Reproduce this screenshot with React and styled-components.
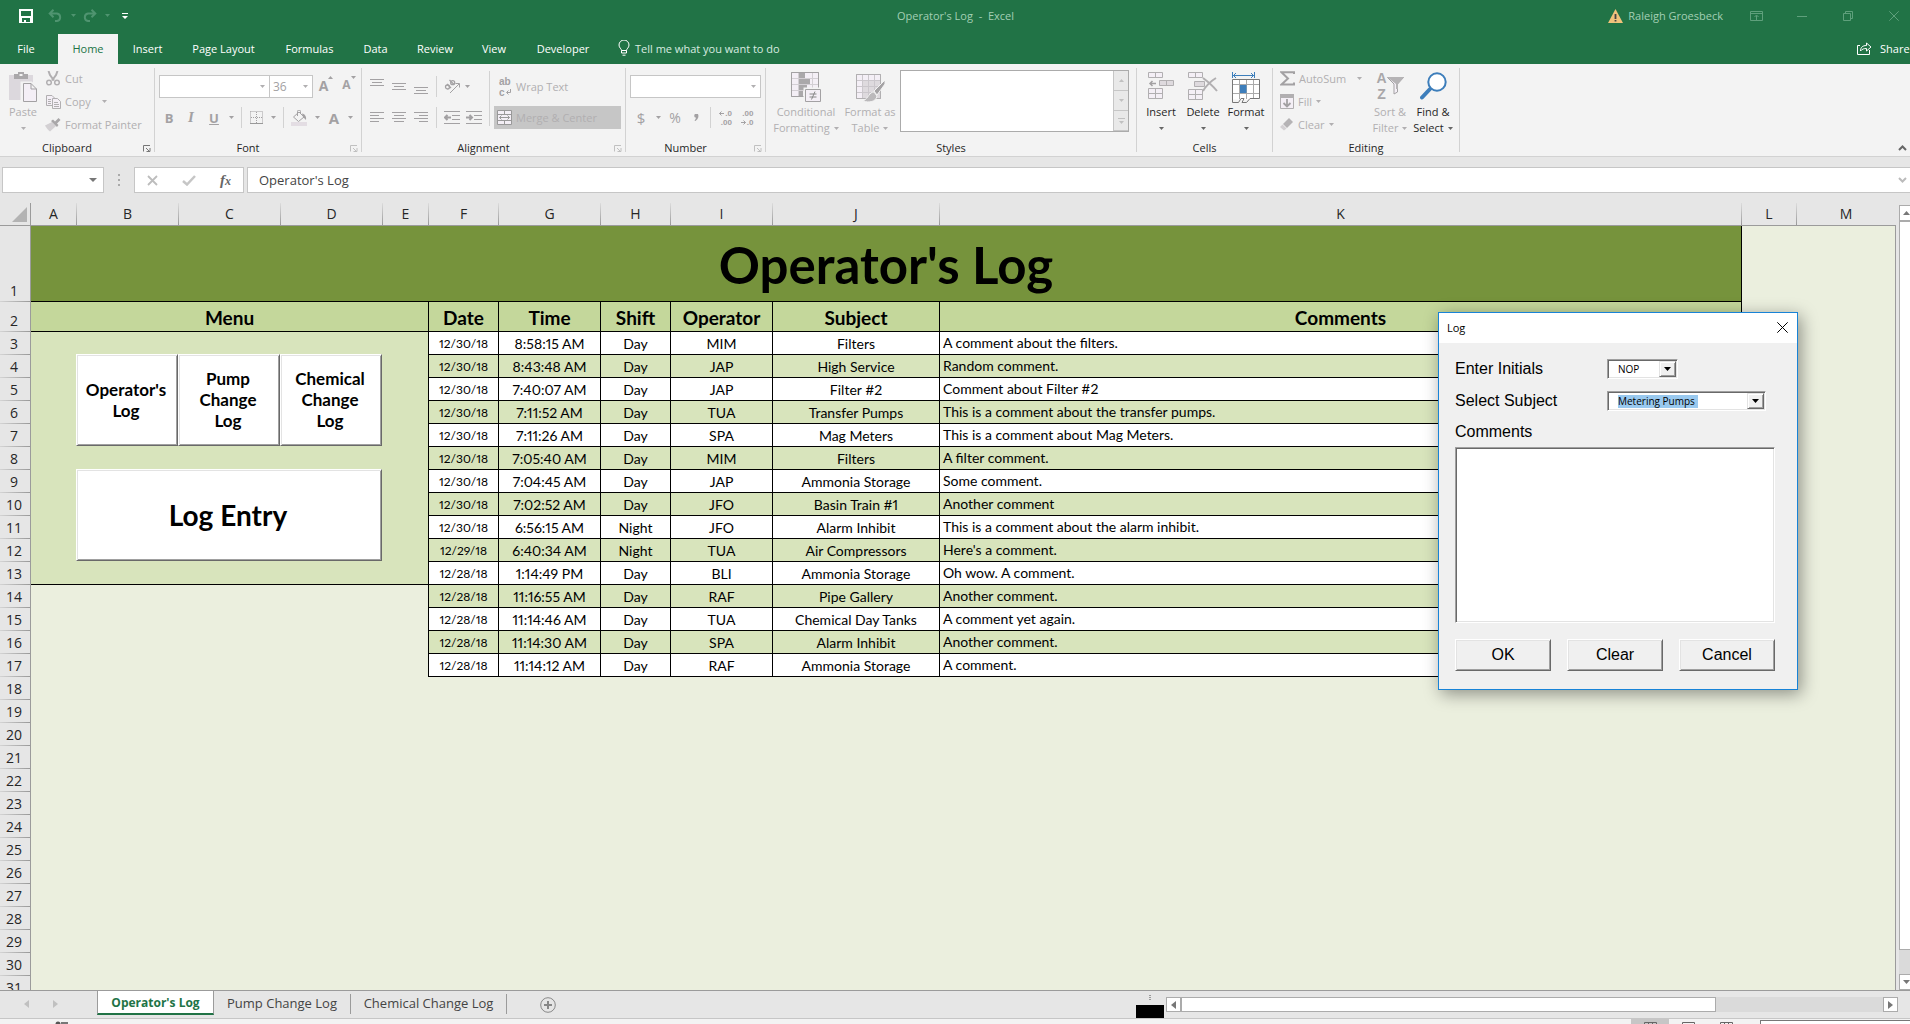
import React from "react";
import styled, { createGlobalStyle, css } from "styled-components";

const ui = `"Open Sans", "Noto Sans", sans-serif`;
const sheetFont = `Lato, "Open Sans", sans-serif`;
const dim = "#b1afb1";
const mid = "#a3a1a3";
const pale = "#f4eff6";

const Global = createGlobalStyle`
  * { box-sizing: border-box; }
  body { margin: 0; overflow: hidden; font-family: ${ui}; }
  button, select, input, textarea { font: inherit; color: inherit; margin: 0; padding: 0; border: 0; border-radius: 0; background: none; outline: none; }
  svg { display: block; flex: none; }
`;

const Window = styled.div`
  display: flex;
  flex-direction: column;
  height: 100vh;
  background: #e6e6e6;
  font-size: 11px;
  color: #262626;
  white-space: nowrap;
`;

/* ---------- title bar and ribbon tabs ---------- */
const TitleBar = styled.header`
  display: grid;
  grid-template-columns: 1fr auto 1fr;
  align-items: center;
  height: 34px;
  padding: 0 11px 3px 12px;
  background: #217346;
  color: #a3cfb4;
`;
const QuickAccess = styled.div`
  display: flex;
  align-items: center;
`;
const QuickButton = styled.button`
  display: flex;
  align-items: center;
  justify-content: center;
  width: ${(p) => p.$w}px;
  height: 24px;
  color: ${(p) => (p.$on ? "#fff" : "#4f9470")};
`;
const DocTitle = styled.div`
  white-space: pre;
`;
const Account = styled.div`
  display: flex;
  align-items: center;
  justify-content: flex-end;
`;
const UserName = styled.span`
  margin: 0 10px 0 5px;
`;
const WindowButton = styled.button`
  display: flex;
  align-items: center;
  justify-content: ${(p) => (p.$last ? "flex-end" : "center")};
  width: ${(p) => (p.$last ? 28 : 46)}px;
  height: 24px;
  color: #5fa07c;
`;
const TabStrip = styled.nav`
  display: flex;
  height: 30px;
  background: #217346;
  color: #fff;
  overflow: hidden;
`;
const RibbonTab = styled.button`
  width: ${(p) => p.$w}px;
  height: 30px;
  padding: 0 ${(p) => (p.$first ? 6 : 0)}px 2px 0;
  text-align: center;
  background: ${(p) => (p.$active ? "#f3f3f3" : "transparent")};
  color: ${(p) => (p.$active ? "#217346" : "#fff")};
`;
const TellMe = styled.button`
  display: flex;
  align-items: center;
  gap: 5px;
  margin-left: 12px;
  padding-bottom: 2px;
  color: #d9ebe0;
`;
const Share = styled.button`
  display: flex;
  align-items: center;
  gap: 8px;
  flex: none;
  margin: 0 0 0 auto;
  padding-bottom: 2px;
  width: 53px;
`;

/* ---------- ribbon ---------- */
const Ribbon = styled.section`
  display: flex;
  height: 93px;
  padding-top: 4px;
  background: #f3f3f3;
  border-bottom: 1px solid #d2d2d2;
  color: ${dim};
`;
const GroupBox = styled.div`
  display: flex;
  flex-direction: column;
  flex: none;
  width: ${(p) => p.$w}px;
  height: 84px;
  border-right: 1px solid #d2d2d2;
`;
const GroupBody = styled.div`
  display: flex;
  height: 71px;
  padding: ${(p) => (p.$rows ? 3 : 0)}px 4px 0;
`;
const GroupFoot = styled.div`
  display: grid;
  grid-template-columns: 1fr ${(p) => (p.$launcher ? "20px" : "")};
  height: 13px;
  line-height: 17px;
  text-align: center;
  color: #262626;
`;
const Launcher = styled.button`
  display: flex;
  padding: 6px 0 0 9px;
  color: ${(p) => (p.$on ? "#777" : "#c0c0c0")};
`;
const Column = styled.div`
  display: flex;
  flex-direction: column;
`;
const ToolRow = styled.div`
  display: flex;
  align-items: center;
  height: 31px;
`;
const Tool = styled.button`
  display: flex;
  align-items: ${(p) => (p.$top ? "flex-start" : "center")};
  justify-content: center;
  flex: none;
  width: ${(p) => p.$w}px;
  height: 22px;
  color: ${mid};
  font-size: ${(p) => p.$size || 14}px;
  font-weight: ${(p) => (p.$bold ? 700 : 400)};
  font-style: ${(p) => (p.$italic ? "italic" : "normal")};
  font-family: ${(p) => (p.$serif ? `"Liberation Serif", serif` : ui)};
  text-decoration: ${(p) => (p.$under ? "underline" : "none")};
`;
const Rule = styled.i`
  flex: none;
  width: 1px;
  height: ${(p) => p.$h || 21}px;
  margin: 0 ${(p) => p.$m}px;
  background: #d2d2d2;
`;
const BigTool = styled.button`
  display: flex;
  flex-direction: column;
  align-items: center;
  flex: none;
  width: ${(p) => p.$w}px;
  padding-top: 4px;
  line-height: 16px;
  color: ${(p) => (p.$on ? "#262626" : dim)};
`;
const BigIcon = styled.span`
  height: 32px;
`;
const Line = styled.span`
  display: flex;
  align-items: center;
  gap: 4px;
  height: 16px;
`;
const SmallTools = styled.div`
  display: flex;
  flex-direction: column;
  width: ${(p) => p.$w}px;
  margin-top: -1px;
`;
const SmallTool = styled.button`
  display: flex;
  align-items: center;
  gap: 4px;
  height: 23px;
  padding-left: 3px;
  color: ${dim};
`;
const IconSlot = styled.span`
  display: flex;
  justify-content: center;
  width: 16px;
`;
const Spacer = styled.span`
  width: ${(p) => p.$w}px;
`;
const TextTool = styled.button`
  display: flex;
  align-items: center;
  gap: 4px;
  width: 127px;
  height: 23px;
  padding-left: 3px;
  background: ${(p) => (p.$pressed ? "#c6c6c6" : "transparent")};
`;
const Combo = styled.span`
  display: flex;
  align-items: center;
  width: ${(p) => p.$w}px;
  height: 23px;
  padding-right: 4px;
  background: #fff;
  border: 1px solid #c6c6c6;
  border-left-width: ${(p) => (p.$joined ? 0 : 1)}px;
  font-size: 12px;
`;
const BareSelect = styled.select`
  appearance: none;
  flex: 1;
  min-width: 0;
  padding-left: 3px;
  color: ${mid};
  opacity: 1;
`;
const Gallery = styled.div`
  display: flex;
  width: 229px;
  height: 62px;
  margin: 2px 0 0 2px;
  background: #fff;
  border: 1px solid #ababab;
`;
const GalleryKeys = styled.div`
  display: grid;
  grid-template-rows: repeat(3, 1fr);
  width: 15px;
  margin-left: auto;
`;
const GalleryKey = styled.button`
  display: flex;
  flex-direction: column;
  align-items: center;
  justify-content: center;
  gap: 2px;
  background: #e9e9e9;
  border-left: 1px solid #c6c6c6;
  border-bottom: 1px solid #c6c6c6;
`;
const GalleryBar = styled.i`
  width: 7px;
  height: 1px;
  background: #c0c0c0;
`;
const Collapse = styled.button`
  align-self: flex-end;
  margin: 0 3px 5px auto;
  color: #666;
`;

/* ---------- formula bar ---------- */
const FormulaBar = styled.section`
  display: flex;
  align-items: center;
  height: 46px;
  padding: 0 0 0 2px;
`;
const Boxed = css`
  display: flex;
  align-items: center;
  height: 26px;
  background: #fff;
  border: 1px solid #c6c6c6;
`;
const NameBox = styled.label`
  ${Boxed}
  width: 102px;
  padding-right: 6px;
`;
const BareInput = styled.input`
  flex: 1;
  min-width: 0;
  padding-left: ${(p) => p.$pad || 0}px;
  font-size: 13px;
  color: #444;
`;
const Grip = styled.span`
  display: grid;
  gap: 3px;
  justify-content: center;
  width: 30px;
`;
const Dot = styled.i`
  width: 2px;
  height: 2px;
  background: #aaa;
`;
const FormulaKeys = styled.div`
  ${Boxed}
  width: 110px;
  margin-right: 3px;
  justify-content: space-around;
`;
const FormulaField = styled.label`
  ${Boxed}
  flex: 1;
  border-right: 0;
  padding-right: 3px;
`;

/* ---------- sheet ---------- */
const Workspace = styled.main`
  display: grid;
  grid-template-columns: 31px minmax(0, 1fr) 14px;
  grid-template-rows: 23px minmax(0, 1fr);
  flex: 1;
  min-height: 0;
`;
const Corner = styled.div`
  display: flex;
  align-items: flex-end;
  justify-content: flex-end;
  padding: 0 3px 3px 0;
  border-right: 1px solid #9b9b9b;
  border-bottom: 1px solid #9b9b9b;
`;
const ColumnHeads = styled.div`
  display: grid;
  grid-template-columns: 46px 102px 102px 102px 46px 70px 102px 70px 102px 167px minmax(0, 1fr) 55px 99px;
  border-bottom: 1px solid #9b9b9b;
`;
const ColumnHead = styled.div`
  padding-right: 1px;
  font-size: 14px;
  line-height: 21px;
  text-align: center;
  background: linear-gradient(#dcdcdc, #999) right / 1px 100% no-repeat;
  &:last-child { background: none; }
`;
const RowHeads = styled.div`
  border-right: 1px solid #9b9b9b;
  overflow: hidden;
`;
const RowHead = styled.div`
  display: flex;
  align-items: flex-end;
  justify-content: center;
  height: ${(p) => p.$h}px;
  padding-right: 2px;
  font-size: 14px;
  line-height: 22px;
  background: linear-gradient(90deg, #d4d4d4, #999) bottom / 100% 1px no-repeat;
`;
const Sheet = styled.div`
  padding-right: 153px;
  background: #ebefde;
  border-right: 1px solid #9b9b9b;
  font-family: ${sheetFont};
  color: #000;
  overflow: hidden;
`;
const Banner = styled.h1`
  margin: 0;
  height: 76px;
  border-right: 1px solid #000;
  border-bottom: 1px solid #000;
  background: #76933c;
  font-size: 51px;
  font-weight: 700;
  line-height: 78px;
  text-align: center;
`;
const Split = styled.div`
  display: flex;
  align-items: flex-start;
`;
const MenuPanel = styled.aside`
  flex: none;
  width: 397px;
  height: 283px;
  background: #d8e4bc;
  border-bottom: 1px solid #000;
`;
const MenuTitle = styled.h2`
  margin: 0;
  height: 30px;
  border-bottom: 1px solid #000;
  background: #c4d79b;
  font-size: 19px;
  font-weight: 700;
  line-height: 31px;
  text-align: center;
`;
const MenuButtons = styled.div`
  display: grid;
  grid-template-columns: repeat(3, 102px);
  grid-auto-rows: 92px;
  row-gap: 23px;
  padding: 22px 45px;
`;
const MenuButton = styled.button`
  grid-column: ${(p) => (p.$wide ? "1 / -1" : "auto")};
  padding: 0 2px 1px 0;
  background: #fff;
  border: 1px solid;
  border-color: #fff #696969 #696969 #fff;
  box-shadow: inset 1px 1px #e3e3e3, inset -1px -1px #a0a0a0;
  font-size: ${(p) => (p.$wide ? 28 : 17)}px;
  font-weight: 700;
  line-height: ${(p) => (p.$wide ? 32 : 21)}px;
  white-space: pre-line;
`;
const LogTable = styled.table`
  flex: 1;
  width: 100%;
  table-layout: fixed;
  border-collapse: separate;
  border-spacing: 0;
  border-left: 1px solid #000;
  font-variant-numeric: proportional-nums;
`;
const Head = styled.th`
  height: 30px;
  padding: 3px 0 0;
  border-right: 1px solid #000;
  border-bottom: 1px solid #000;
  background: #c4d79b;
  font-size: 19px;
  font-weight: 700;
  line-height: 26px;
`;
const Row = styled.tr`
  background: #fff;
  &:nth-child(even) { background: #d8e4bc; }
`;
const Cell = styled.td`
  height: 23px;
  padding: ${(p) => (p.$left ? "0 0 0 3px" : "1px 0 0")};
  border-right: 1px solid #000;
  border-bottom: 1px solid #000;
  font-size: ${(p) => (p.$date ? 12 : 14)}px;
  line-height: 20px;
  text-align: ${(p) => (p.$left ? "left" : "center")};
`;

/* ---------- scroll bars, sheet tabs, status ---------- */
const VScroll = styled.div`
  display: flex;
  flex-direction: column;
  grid-row: 1 / 3;
  grid-column: 3;
  margin: 2px 0 0 3px;
  background: #dadada;
`;
const VKey = styled.button`
  display: flex;
  align-items: center;
  justify-content: center;
  height: 16px;
  padding-left: 3px;
  background: #fff;
  border: 1px solid #ababab;
  border-right: 0;
`;
const VThumb = styled.div`
  flex: 0 1 729px;
  background: #fff;
  border: 1px solid #ababab;
  border-right: 0;
`;
const Gap = styled.div`
  flex: 1;
`;
const SheetBar = styled.nav`
  display: flex;
  height: 29px;
  flex: none;
  border-top: 1px solid #9b9b9b;
  border-bottom: 1px solid #c6c6c6;
  color: #444;
`;
const TabArrows = styled.div`
  display: flex;
  align-items: center;
  gap: 24px;
  width: 97px;
  padding: 0 0 2px 24px;
`;
const SheetTab = styled.button`
  align-self: flex-start;
  width: ${(p) => p.$w}px;
  height: 20px;
  margin-top: 3px;
  padding-bottom: 2px;
  font-size: 13px;
  line-height: 18px;
  border-right: 1px solid #9b9b9b;
  ${(p) =>
    p.$active &&
    css`
      height: 24px;
      margin-top: 0;
      padding: 2px 0 0;
      background: #fff;
      color: #217346;
      font-size: 12px;
      font-weight: 700;
      border-left: 1px solid #9b9b9b;
      border-bottom: 2px solid #217346;
    `}
`;
const AddSheet = styled.button`
  width: 82px;
  display: flex;
  align-items: center;
  justify-content: center;
`;
const ScrollLead = styled.div`
  display: flex;
  flex-direction: column;
  justify-content: space-between;
  align-items: center;
  width: 28px;
  margin: 0 2px 0 auto;
  padding-top: 4px;
`;
const SmallGrip = styled.span`
  display: grid;
  gap: 1px;
`;
const Dash = styled.i`
  width: 2px;
  height: 1px;
  background: #999;
`;
const BlackBlock = styled.i`
  width: 28px;
  height: 13px;
  background: #000;
`;
const HScroll = styled.div`
  display: flex;
  width: 732px;
  height: 15px;
  margin: 6px 12px 0 0;
  background: #dadada;
`;
const HKey = styled.button`
  display: flex;
  align-items: center;
  justify-content: center;
  width: 15px;
  background: #fff;
  border: 1px solid #ababab;
`;
const HThumb = styled.div`
  width: 535px;
  background: #fff;
  border: 1px solid #ababab;
`;
const StatusBar = styled.footer`
  display: flex;
  height: 5px;
  flex: none;
  padding-left: 54px;
  background: #f3f3f3;
  overflow: hidden;
`;
const ViewKeys = styled.div`
  display: flex;
  margin-left: auto;
`;
const ViewKey = styled.button`
  display: flex;
  justify-content: center;
  width: 38px;
  height: 22px;
  padding-top: 3px;
  background: ${(p) => (p.$on ? "#c6c6c6" : "none")};
`;
const StatusBox = styled.div`
  width: 150px;
  height: 20px;
  margin: 1px 0 0 15px;
  border: 1px solid #777;
  border-right: 0;
  background: #fff;
`;

/* ---------- dialog ---------- */
const Dialog = styled.form`
  position: absolute;
  top: 312px;
  right: 112px;
  width: 360px;
  background: #f0f0f0;
  border: 1px solid #1883d7;
  box-shadow: 3px 4px 16px rgba(0, 0, 0, 0.4);
  font-family: "Liberation Sans", Arial, sans-serif;
  font-size: 16px;
  color: #000;
`;
const DialogBar = styled.div`
  display: flex;
  align-items: center;
  justify-content: space-between;
  height: 30px;
  padding: 0 9px 2px 8px;
  background: #fff;
  font-family: ${ui};
  font-size: 11px;
`;
const DialogBody = styled.div`
  padding: 10px 22px 18px 16px;
`;
const Field = styled.div`
  display: grid;
  grid-template-columns: 152px auto;
  align-items: center;
  justify-content: start;
  height: ${(p) => (p.$last ? 30 : 32)}px;
`;
const DropDown = styled.div`
  display: flex;
  width: ${(p) => p.$w}px;
  height: 20px;
  padding: 1px;
  background: #fff;
  border: 1px solid;
  border-color: #a0a0a0 #fff #fff #a0a0a0;
  box-shadow: inset 1px 1px #696969, inset -1px -1px #e3e3e3;
`;
const DialogSelect = styled.select`
  appearance: none;
  flex: 1;
  min-width: 0;
  padding-left: 9px;
  font-family: ${ui};
  font-size: 10px;
  line-height: 16px;
  background: ${(p) => (p.$selected ? "linear-gradient(#99c9ef, #99c9ef) 9px 2px / 80px 13px no-repeat" : "none")};
`;
const DropKey = styled.span`
  display: flex;
  align-items: center;
  justify-content: center;
  width: 17px;
  background: #f0f0f0;
  border: 1px solid;
  border-color: #e3e3e3 #696969 #696969 #e3e3e3;
  box-shadow: inset 1px 1px #fff, inset -1px -1px #a0a0a0;
`;
const Comments = styled.textarea`
  display: block;
  width: 100%;
  height: 176px;
  resize: none;
  background: #fff;
  border: 1px solid;
  border-color: #a0a0a0 #fff #fff #a0a0a0;
  box-shadow: inset 1px 1px #696969, inset -1px -1px #e3e3e3;
`;
const DialogButtons = styled.div`
  display: flex;
  justify-content: space-between;
  margin-top: 16px;
`;
const DialogButton = styled.button`
  width: 96px;
  height: 32px;
  border: 1px solid;
  border-color: #fff #696969 #696969 #fff;
  box-shadow: inset 1px 1px #e3e3e3, inset -1px -1px #a0a0a0;
`;

/* ---------- icons ---------- */
const Svg = ({ w, h, children, ...rest }) => (
  <svg width={w} height={h} viewBox={`0 0 ${w} ${h}`} fill="none" stroke="currentColor" aria-hidden="true" {...rest}>
    {children}
  </svg>
);
const Caret = ({ color = "currentColor", w = 5, h = 3 }) => (
  <Svg w={w} h={h} stroke="none"><path d={`M0 0H${w}L${w / 2} ${h}Z`} fill={color} /></Svg>
);
const SideCaret = ({ left, color = "#777" }) => (
  <Svg w={5} h={8} stroke="none"><path d={left ? "M5 0V8L0 4Z" : "M0 0V8L5 4Z"} fill={color} /></Svg>
);
const UpCaret = ({ color, w = 7, h = 4 }) => (
  <Svg w={w} h={h} stroke="none"><path d={`M0 ${h}H${w}L${w / 2} 0Z`} fill={color} /></Svg>
);
const SaveIcon = () => (
  <Svg w={14} h={14} stroke="none"><path fillRule="evenodd" fill="#fff" d="M0 0H14V14H0ZM2 2V7H12V2ZM3 9V13H5V11H7V13H11V9Z" /></Svg>
);
const UndoIcon = ({ flip }) => (
  <Svg w={14} h={13} strokeWidth="2"><g transform={flip ? "matrix(-1 0 0 1 14 0)" : undefined}><path d="M1.5 4.5H9a3.8 3.8 0 0 1 0 7.5H7M5.5 .7 1.7 4.5l3.8 3.8" /></g></Svg>
);
const CustomizeIcon = () => (
  <Svg w={6} h={6} stroke="none"><path d="M0 0H6V1H0ZM0 3H6L3 6Z" fill="#fff" /></Svg>
);
const WarnIcon = () => (
  <Svg w={15} h={14} stroke="none"><path d="M7.5 0 15 14H0Z" fill="#f0c27b" /><path d="M6.6 5H8.4V10H6.6ZM6.6 11H8.4V12.5H6.6Z" fill="#444" /></Svg>
);
const RibbonOptIcon = () => (
  <Svg w={13} h={10}><path d="M.5.5h12v9H.5zM.5 2.5h12M6.5 9V4.5M4.5 6l2-2 2 2" /></Svg>
);
const MinIcon = () => <Svg w={10} h={10}><path d="M0 5.5H10" /></Svg>;
const RestoreIcon = () => <Svg w={10} h={10}><path d="M.5 2.5h7v7h-7zM2.5 2.5v-2h7v7h-2" /></Svg>;
const CloseIcon = ({ s = 10 }) => <Svg w={s} h={s}><path d={`M.3.3 ${s - 0.3} ${s - 0.3}M${s - 0.3}.3.3 ${s - 0.3}`} /></Svg>;
const BulbIcon = () => (
  <Svg w={12} h={16} stroke="#fff"><path d="M3.5 10.5C3.5 8.5 1 8 1 5a5 5 0 0 1 10 0c0 3-2.5 3.5-2.5 5.5zM3.5 10.5V13h5v-2.5M4.5 15.2h3" /></Svg>
);
const ShareIcon = () => (
  <Svg w={15} h={14}><path d="M3 4.5H.5v9h12V9M3.5 10c0-3.5 2-5.5 6-5.5V2l4.5 4-4.5 4V7.5C7 7.5 5 8 3.5 10z" /></Svg>
);
const LauncherIcon = () => (
  <Svg w={8} h={7}><path d="M.5 6.5V.5H7M3 3l3 3M7 3v3.5H3.5" /></Svg>
);
const PasteIcon = () => (
  <Svg w={29} h={31} stroke="none">
    <path d="M0 3H24V28H0Z" fill="#dcd8dd" />
    <path d="M5 2H9V0H15V2H19V7H5Z" fill="#aaa8aa" /><path d="M10.5 2H13.5V4H10.5Z" fill="#f3f3f3" />
    <path d="M13.5 11.5H22L27.5 17V29.5H13.5Z" fill={pale} stroke="#f3f3f3" strokeWidth="4" />
    <path d="M14.5 11.5H22L27.5 17V29.5H14.5ZM22 11.5V17H27.5" fill={pale} stroke={mid} />
  </Svg>
);
const CutIcon = () => (
  <Svg w={14} h={15} strokeWidth="1.5"><path d="M2.5 0 4 4l4 5.5M11.5 0 10 4 6 9.5" strokeWidth="2" /><circle cx="3" cy="11.5" r="2.3" /><circle cx="11" cy="11.5" r="2.3" /></Svg>
);
const CopyIcon = () => (
  <Svg w={15} h={14}>
    <path d="M.5.5H6L8.5 3V10.5H.5Z" fill={pale} /><path d="M2 4.5H5M2 6.5H5M2 8.5H5" />
    <path d="M6.5 3.5H11.5L14.5 6.5V13.5H6.5Z" fill={pale} /><path d="M8 7.5H12M8 9.5H13M8 11.5H13" />
  </Svg>
);
const PainterIcon = () => (
  <Svg w={16} h={14} stroke="none"><path d="M7 4 11 8 5 13.5C3 12 1 9.5 0 7.5Z" fill="#d3d0d3" /><path d="M6 3 8 1.5 10 3.5 13.5 0 15.5 2 12 5.5 13.5 7 12 9Z" fill="#a9a7a9" /></Svg>
);
const BordersIcon = () => (
  <Svg w={13} h={13}><path d="M.5.5H12.5V12M.5.5V12M6.5 1V12M1 6.5H12" strokeDasharray="1 1" /><path d="M0 12.5H13" stroke="#999" /></Svg>
);
const BucketIcon = () => (
  <Svg w={16} h={16}><path d="M2.5 7 8 2l5 5-5.5 4.5z" fill="#f3f3f3" /><path d="M6.5 6V1.5a1.5 1.5 0 0 1 3 0V4" /><path d="M11 3.5c3 .5 4.5 3 4 6.5l-3-3z" fill={mid} stroke="none" /><path d="M0 12H16V16H0Z" fill="#e3dde3" stroke="none" /></Svg>
);
const Lines = ({ d, h = 11 }) => <Svg w={14} h={h}><path d={d} /></Svg>;
const OrientIcon = () => (
  <Svg w={17} h={15} strokeWidth="1.3"><circle cx="3.5" cy="8" r="2" /><path d="M3 5l4 4M5.5 1l4.5 4.5" /><circle cx="8.7" cy="3.7" r="2" /><path d="M6 14 15 5M11.5 4.5H15.5V8.5" strokeWidth="1" /></Svg>
);
const IndentIcon = ({ right }) => (
  <Svg w={16} h={13}><path d="M0 .5H16M8 4.5H16M8 8.5H16M0 12.5H16" /><path d={right ? "M0 6.5H6M3.5 4 6 6.5 3.5 9" : "M7 6.5H1M3.5 4 1 6.5 3.5 9"} strokeWidth="2" /></Svg>
);
const CommaIcon = () => (
  <Svg w={5} h={7} stroke="none"><path d="M1 0H4C5 2 4.5 5 1.5 7L.5 6.5C1.5 5.5 2 4.5 2 3.5H1C0 3 0 .5 1 0Z" fill={mid} /></Svg>
);
const WrapGlyph = styled.span`
  display: grid;
  width: 15px;
  padding-left: 2px;
  font-family: "Liberation Sans", sans-serif;
  font-size: 10px;
  font-weight: 700;
  line-height: 11px;
  color: ${mid};
`;
const WrapLine = styled.span`
  display: flex;
  align-items: center;
  gap: 1px;
`;
const ReturnIcon = () => <Svg w={5} h={6}><path d="M4.5 0V3.5H1M2.5 1.5l-2 2 2 2" /></Svg>;
const MergeIcon = () => (
  <Svg w={15} h={15}><path d="M.5.5H14.5V14.5H.5ZM.5 4.5H14.5M.5 10.5H14.5M7.5.5V4.5M7.5 10.5V14.5" fill={pale} stroke="#999" /><path d="M2.5 7.5H12.5M4.5 5.5l-2 2 2 2M10.5 5.5l2 2-2 2" stroke="#999" /></Svg>
);
const DecimalGlyph = styled.span`
  display: grid;
  justify-items: end;
  font-family: "Liberation Sans", sans-serif;
  font-size: 8px;
  font-weight: 700;
  line-height: 9px;
`;
const DecimalLine = styled.span`
  display: flex;
  align-items: center;
  gap: 1px;
`;
const TinyArrow = ({ right }) => (
  <Svg w={5} h={5}><path d={right ? "M0 2.5H4.5M2.5.5l2 2-2 2" : "M5 2.5H.5M2.5.5l-2 2 2 2"} /></Svg>
);
const CondIcon = () => (
  <Svg w={30} h={30} stroke={mid}>
    <path d="M.5.5H27.5V24.5H.5Z" fill={pale} /><path d="M.5 6.5H27.5M.5 12.5H27.5M.5 18.5H27.5M7.5.5V24.5M21.5.5V24.5" stroke="#d3cfd4" />
    <path d="M8 1H14V6H8ZM8 7H19V12H8ZM8 13H16V18H8ZM8 19H12V24H8Z" fill="#aaa8aa" stroke="none" /><path d="M.5.5H27.5V24.5H.5Z" />
    <path d="M12.5 15.5H30V30H12.5Z" fill="#f3f3f3" stroke="none" /><path d="M14.5 17.5H29.5V29.5H14.5Z" fill={pale} /><path d="M18.5 22H25.5M18.5 25H25.5M24 19.5 20.5 27.5" stroke="#888" />
  </Svg>
);
const TableIcon = () => (
  <Svg w={29} h={30} stroke={dim}>
    <path d="M.5 2.5H24.5V26.5H.5Z" fill={pale} /><path d="M7 8H24V26H7Z" fill="#dedade" stroke="none" /><path d="M.5 8.5H24.5M.5 14.5H24.5M.5 20.5H24.5M6.5 2.5V26.5M12.5 2.5V26.5M18.5 2.5V26.5" stroke="#cbc7cc" /><path d="M.5 2.5H24.5V26.5H.5Z" />
    <path d="M29 8 18 19l3 4 8-11z" fill="#a5a3a5" stroke="#f3f3f3" /><path d="M18 20c-5 0-5 6-11 9 6 2 13 1 14-5z" fill="#bbb9bb" stroke="#f3f3f3" />
  </Svg>
);
const InsertIcon = () => (
  <Svg w={27} h={28} stroke={dim}><path d="M.5.5H14.5V5.5H.5ZM7.5.5V5.5M.5 16.5H14.5V26.5H.5ZM7.5 16.5V26.5M.5 21.5H14.5" fill={pale} /><path d="M11.5 8.5H25.5V13.5H11.5ZM18.5 8.5V13.5" fill="#dedade" /><path d="M8 11.5H2M4.5 9 2 11.5 4.5 14" strokeWidth="1.5" stroke={mid} /></Svg>
);
const DeleteIcon = () => (
  <Svg w={30} h={28} stroke={dim}><path d="M.5.5H14.5V5.5H.5ZM7.5.5V5.5M.5 17.5H14.5V27.5H.5ZM7.5 17.5V27.5M.5 22.5H14.5" fill={pale} /><path d="M6.5 9.5H16.5V14.5H6.5Z" fill="#dedade" /><path d="M15 6C19 9 25 14 29 19M28 6C23 9 18 14 15 19" strokeWidth="2" /></Svg>
);
const FormatIcon = () => (
  <Svg w={28} h={31}>
    <path d="M.5 0V6M22.5 0V6M1 3.5H22M4 1 1.5 3.5 4 6M19 1l2.5 2.5L19 6" stroke="#3d7ebb" />
    <path d="M.5 7.5H27.5V27.5H.5Z" fill="#fff" stroke="none" /><path d="M.5 12.5H27.5M.5 21.5H27.5M7.5 7V27M14.5 7V27M21.5 7V27" stroke="#aaa" /><path d="M8 13H14.5V21H8Z" fill="#3d7ebb" stroke="none" />
    <path d="M.5 7.5H27.5V26.5H18L14.5 30.5H10L12 26.5H9L6.5 30.5H.5Z" stroke="#777" />
  </Svg>
);
const SigmaIcon = () => (
  <Svg w={15} h={15}><path d="M14 3V1.2H1.5L8 7.5 1.5 13.5H14V11.5" strokeWidth="2" stroke={mid} /></Svg>
);
const FillIcon = () => (
  <Svg w={14} h={15}><path d="M.5.5H13.5V14.5H.5Z" fill={pale} /><path d="M0 0H14V4H0Z" fill={dim} stroke="none" /><path d="M7 5V12M3.5 9 7 12.5 10.5 9" strokeWidth="1.8" stroke={mid} /></Svg>
);
const EraserIcon = () => (
  <Svg w={14} h={13} stroke="none"><path d="M9 0 13 4 7 10 3 6Z" fill="#b5b3b5" /><path d="M2.5 6.5 6.5 10.5 4 12.5 0 9Z" fill="#d3d0d3" /></Svg>
);
const SortLetters = styled.span`
  display: grid;
  font-family: "Liberation Sans", sans-serif;
  font-size: 14px;
  font-weight: 700;
  line-height: 16px;
  color: #a9a7a9;
`;
const SortBox = styled.span`
  display: flex;
  align-items: center;
  height: 28px;
`;
const FunnelIcon = () => (
  <Svg w={17} h={18} stroke={mid}><path d="M.5.5H16.5L10.5 7V15L7 17V7Z" fill={pale} /><path d="M0 0H17L11 7V12H9V7Z" fill="#b5b3b5" stroke="none" /></Svg>
);
const FindIcon = () => (
  <Svg w={27} h={28}><path d="M10 17 2 25.5" stroke="#3d7ebb" strokeWidth="4" strokeLinecap="round" /><circle cx="17" cy="10" r="8.7" fill="#fff" stroke="#3d7ebb" strokeWidth="2" /></Svg>
);
const ChevronIcon = ({ down, color }) => (
  <Svg w={9} h={6} strokeWidth="2" stroke={color}><path d={down ? "M1 1 4.5 4.5 8 1" : "M1 5 4.5 1.5 8 5"} /></Svg>
);
const CrossIcon = () => <Svg w={11} h={11} strokeWidth="1.8" stroke="#bdbdbd"><path d="M1 1 10 10M10 1 1 10" /></Svg>;
const CheckIcon = () => <Svg w={14} h={11} strokeWidth="2.5" stroke="#c6c6c6"><path d="M1 6 5 9.5 13 1" /></Svg>;
const PlusIcon = () => <Svg w={16} h={16} stroke="#888"><circle cx="8" cy="8" r="7.3" /><path d="M8 4V12M4 8H12" strokeWidth="2" /></Svg>;
const CornerIcon = () => <Svg w={15} h={15} stroke="none"><path d="M15 0V15H0Z" fill="#b3b3b3" /></Svg>;
const ViewIcon = ({ grid }) => <Svg w={13} h={12} stroke="#666"><path d={grid ? "M.5.5H12.5V11.5H.5ZM4.5 0V12M8.5 0V12M0 4.5H13" : "M.5.5H12.5V11.5H.5Z"} /></Svg>;
const MacroIcon = () => <Svg w={14} h={10} stroke="none"><circle cx="4" cy="5" r="2.5" fill="#555" /><path d="M7 3H14V5H7Z" fill="#777" /></Svg>;
const Fx = styled.span`
  font-family: "Liberation Serif", serif;
  font-size: 15px;
  font-style: italic;
  font-weight: 700;
  color: #666;
`;
const FxSmall = styled.span`
  font-size: 12px;
`;

/* ---------- data ---------- */
const TABS = [["File", 58], ["Home", 60], ["Insert", 59], ["Page Layout", 93], ["Formulas", 79], ["Data", 53], ["Review", 66], ["View", 52], ["Developer", 86]];
const LOG = [
  ["12/30/18", "8:58:15 AM", "Day", "MIM", "Filters", "A comment about the filters."],
  ["12/30/18", "8:43:48 AM", "Day", "JAP", "High Service", "Random comment."],
  ["12/30/18", "7:40:07 AM", "Day", "JAP", "Filter #2", "Comment about Filter #2"],
  ["12/30/18", "7:11:52 AM", "Day", "TUA", "Transfer Pumps", "This is a comment about the transfer pumps."],
  ["12/30/18", "7:11:26 AM", "Day", "SPA", "Mag Meters", "This is a comment about Mag Meters."],
  ["12/30/18", "7:05:40 AM", "Day", "MIM", "Filters", "A filter comment."],
  ["12/30/18", "7:04:45 AM", "Day", "JAP", "Ammonia Storage", "Some comment."],
  ["12/30/18", "7:02:52 AM", "Day", "JFO", "Basin Train #1", "Another comment"],
  ["12/30/18", "6:56:15 AM", "Night", "JFO", "Alarm Inhibit", "This is a comment about the alarm inhibit."],
  ["12/29/18", "6:40:34 AM", "Night", "TUA", "Air Compressors", "Here's a comment."],
  ["12/28/18", "1:14:49 PM", "Day", "BLI", "Ammonia Storage", "Oh wow. A comment."],
  ["12/28/18", "11:16:55 AM", "Day", "RAF", "Pipe Gallery", "Another comment."],
  ["12/28/18", "11:14:46 AM", "Day", "TUA", "Chemical Day Tanks", "A comment yet again."],
  ["12/28/18", "11:14:30 AM", "Day", "SPA", "Alarm Inhibit", "Another comment."],
  ["12/28/18", "11:14:12 AM", "Day", "RAF", "Ammonia Storage", "A comment."],
];
const rowHeight = (n) => (n === 1 ? 76 : n === 2 ? 30 : 23);

const Group = ({ label, w, rows, launcher, on, children }) => (
  <GroupBox $w={w}>
    <GroupBody $rows={rows}>{children}</GroupBody>
    <GroupFoot $launcher={launcher}>
      <span>{label}</span>
      {launcher && <Launcher $on={on} aria-label={`${label} settings`}><LauncherIcon /></Launcher>}
    </GroupFoot>
  </GroupBox>
);

function RibbonPanel() {
  return (
    <Ribbon>
      <Group label="Clipboard" w={155} launcher on>
        <BigTool $w={38}><BigIcon><PasteIcon /></BigIcon><Line>Paste</Line><Line><Caret /></Line></BigTool>
        <SmallTools $w={110}>
          <SmallTool><IconSlot><CutIcon /></IconSlot>Cut</SmallTool>
          <SmallTool><IconSlot><CopyIcon /></IconSlot>Copy<Spacer $w={3} /><Caret /></SmallTool>
          <SmallTool><IconSlot><PainterIcon /></IconSlot>Format Painter</SmallTool>
        </SmallTools>
      </Group>
      <Group label="Font" w={207} rows launcher>
        <Column>
          <ToolRow>
            <Combo $w={111}><BareSelect disabled aria-label="Font name"><option></option></BareSelect><Caret /></Combo>
            <Combo $w={43} $joined><BareSelect disabled aria-label="Font size"><option>36</option></BareSelect><Caret /></Combo>
            <Tool $w={26} $bold $top $size={14} aria-label="Grow font">A<UpCaret color={mid} w={5} h={3} /></Tool>
            <Tool $w={20} $bold $top $size={12} aria-label="Shrink font">A<Caret /></Tool>
          </ToolRow>
          <ToolRow>
            <Tool $w={20} $bold $size={13}>B</Tool>
            <Tool $w={24} $bold $italic $serif $size={15}>I</Tool>
            <Tool $w={22} $bold $under $size={13}>U</Tool>
            <Tool $w={12} aria-label="Underline style"><Caret /></Tool>
            <Rule $m={4} />
            <Tool $w={20} aria-label="Borders"><BordersIcon /></Tool>
            <Tool $w={14} aria-label="Border style"><Caret /></Tool>
            <Rule $m={3} />
            <Tool $w={24} aria-label="Fill color"><BucketIcon /></Tool>
            <Tool $w={12} aria-label="Fill choices"><Caret /></Tool>
            <Tool $w={22} $bold $size={15}>A</Tool>
            <Tool $w={10} aria-label="Font color choices"><Caret /></Tool>
          </ToolRow>
        </Column>
      </Group>
      <Group label="Alignment" w={264} rows launcher>
        <Column>
          <ToolRow>
            <Tool $w={22} aria-label="Top align"><Lines d="M0 .5H14M2 3.5H12M0 6.5H14" h={15} /></Tool>
            <Tool $w={22} aria-label="Middle align"><Lines d="M0 4.5H14M2 7.5H12M0 10.5H14" h={15} /></Tool>
            <Tool $w={22} aria-label="Bottom align"><Lines d="M0 8.5H14M2 11.5H12M0 14.5H14" h={15} /></Tool>
            <Rule $m={4} />
            <Tool $w={22} aria-label="Orientation"><OrientIcon /></Tool>
            <Tool $w={8} aria-label="Orientation choices"><Caret /></Tool>
          </ToolRow>
          <ToolRow>
            <Tool $w={22} aria-label="Align left"><Lines d="M0 .5H14M0 3.5H9M0 6.5H14M0 9.5H9" /></Tool>
            <Tool $w={22} aria-label="Center"><Lines d="M0 .5H14M2 3.5H12M0 6.5H14M2 9.5H12" /></Tool>
            <Tool $w={22} aria-label="Align right"><Lines d="M0 .5H14M5 3.5H14M0 6.5H14M5 9.5H14" /></Tool>
            <Rule $m={4} />
            <Tool $w={22} aria-label="Decrease indent"><IndentIcon /></Tool>
            <Tool $w={22} aria-label="Increase indent"><IndentIcon right /></Tool>
          </ToolRow>
        </Column>
        <Rule $m={4} $h={55} />
        <Column>
          <ToolRow><TextTool><WrapGlyph><WrapLine>ab</WrapLine><WrapLine>c<ReturnIcon /></WrapLine></WrapGlyph>Wrap Text</TextTool></ToolRow>
          <ToolRow><TextTool $pressed><MergeIcon />Merge &amp; Center</TextTool></ToolRow>
        </Column>
      </Group>
      <Group label="Number" w={140} rows launcher>
        <Column>
          <ToolRow><Combo $w={131}><BareSelect disabled aria-label="Number format"><option></option></BareSelect><Caret /></Combo></ToolRow>
          <ToolRow>
            <Tool $w={22} $size={15}>$</Tool>
            <Tool $w={12} aria-label="Currency choices"><Caret /></Tool>
            <Tool $w={22} $size={14}>%</Tool>
            <Tool $w={20} aria-label="Comma style"><CommaIcon /></Tool>
            <Rule $m={4} />
            <Tool $w={21} aria-label="Increase decimal"><DecimalGlyph><DecimalLine><TinyArrow />.0</DecimalLine><DecimalLine>.00</DecimalLine></DecimalGlyph></Tool>
            <Tool $w={22} aria-label="Decrease decimal"><DecimalGlyph><DecimalLine>.00</DecimalLine><DecimalLine><TinyArrow right />.0</DecimalLine></DecimalGlyph></Tool>
          </ToolRow>
        </Column>
      </Group>
      <Group label="Styles" w={371}>
        <BigTool $w={72}><BigIcon><CondIcon /></BigIcon><Line>Conditional</Line><Line>Formatting<Caret /></Line></BigTool>
        <BigTool $w={56}><BigIcon><TableIcon /></BigIcon><Line>Format as</Line><Line>Table<Caret /></Line></BigTool>
        <Gallery>
          <GalleryKeys>
            <GalleryKey aria-label="Previous styles"><UpCaret color="#c0c0c0" w={5} h={3} /></GalleryKey>
            <GalleryKey aria-label="Next styles"><Caret color="#c0c0c0" /></GalleryKey>
            <GalleryKey aria-label="More styles"><GalleryBar /><Caret color="#c0c0c0" /></GalleryKey>
          </GalleryKeys>
        </Gallery>
      </Group>
      <Group label="Cells" w={136}>
        <BigTool $w={40} $on><BigIcon><InsertIcon /></BigIcon><Line>Insert</Line><Line><Caret color="#666" /></Line></BigTool>
        <BigTool $w={44} $on><BigIcon><DeleteIcon /></BigIcon><Line>Delete</Line><Line><Caret color="#666" /></Line></BigTool>
        <BigTool $w={42} $on><BigIcon><FormatIcon /></BigIcon><Line>Format</Line><Line><Caret color="#666" /></Line></BigTool>
      </Group>
      <Group label="Editing" w={187}>
        <SmallTools $w={92}>
          <SmallTool><SigmaIcon />AutoSum<Spacer $w={3} /><Caret /></SmallTool>
          <SmallTool><FillIcon />Fill<Caret /></SmallTool>
          <SmallTool><EraserIcon />Clear<Caret /></SmallTool>
        </SmallTools>
        <BigTool $w={42}><BigIcon><SortBox><SortLetters><span>A</span><span>Z</span></SortLetters><FunnelIcon /></SortBox></BigIcon><Line>Sort &amp;</Line><Line>Filter<Caret /></Line></BigTool>
        <BigTool $w={44} $on><BigIcon><FindIcon /></BigIcon><Line>Find &amp;</Line><Line>Select<Caret color="#666" /></Line></BigTool>
      </Group>
      <Collapse aria-label="Collapse the ribbon"><ChevronIcon color="#666" /></Collapse>
    </Ribbon>
  );
}

function LogDialog() {
  return (
    <Dialog onSubmit={(e) => e.preventDefault()}>
      <DialogBar>Log<button type="button" aria-label="Close"><CloseIcon s={11} /></button></DialogBar>
      <DialogBody>
        <Field>
          <label htmlFor="initials">Enter Initials</label>
          <DropDown $w={71}><DialogSelect id="initials"><option>NOP</option></DialogSelect><DropKey><Caret w={7} h={4} color="#000" /></DropKey></DropDown>
        </Field>
        <Field>
          <label htmlFor="subject">Select Subject</label>
          <DropDown $w={159}><DialogSelect id="subject" $selected><option>Metering Pumps</option></DialogSelect><DropKey><Caret w={7} h={4} color="#000" /></DropKey></DropDown>
        </Field>
        <Field $last><label htmlFor="comments">Comments</label></Field>
        <Comments id="comments" />
        <DialogButtons>
          <DialogButton>OK</DialogButton>
          <DialogButton type="reset">Clear</DialogButton>
          <DialogButton type="button">Cancel</DialogButton>
        </DialogButtons>
      </DialogBody>
    </Dialog>
  );
}

export default function App() {
  return (
    <>
      <Global />
      <Window>
        <TitleBar>
          <QuickAccess>
            <QuickButton $w={28} $on aria-label="Save"><SaveIcon /></QuickButton>
            <QuickButton $w={30} aria-label="Undo"><UndoIcon /></QuickButton>
            <QuickButton $w={6} aria-label="Undo list"><Caret /></QuickButton>
            <QuickButton $w={28} aria-label="Redo"><UndoIcon flip /></QuickButton>
            <QuickButton $w={6} aria-label="Redo list"><Caret /></QuickButton>
            <QuickButton $w={30} $on aria-label="Customize toolbar"><CustomizeIcon /></QuickButton>
          </QuickAccess>
          <DocTitle>{"Operator's Log  -  Excel"}</DocTitle>
          <Account>
            <WarnIcon />
            <UserName>Raleigh Groesbeck</UserName>
            <WindowButton aria-label="Ribbon display options"><RibbonOptIcon /></WindowButton>
            <WindowButton aria-label="Minimize"><MinIcon /></WindowButton>
            <WindowButton aria-label="Restore"><RestoreIcon /></WindowButton>
            <WindowButton $last aria-label="Close"><CloseIcon /></WindowButton>
          </Account>
        </TitleBar>
        <TabStrip>
          {TABS.map(([name, w], i) => <RibbonTab key={name} $w={w} $first={i === 0} $active={name === "Home"}>{name}</RibbonTab>)}
          <TellMe><BulbIcon />Tell me what you want to do</TellMe>
          <Share><ShareIcon />Share</Share>
        </TabStrip>
        <RibbonPanel />
        <FormulaBar>
          <NameBox><BareInput aria-label="Name box" defaultValue="" /><Caret w={8} h={4} color="#777" /></NameBox>
          <Grip><Dot /><Dot /><Dot /></Grip>
          <FormulaKeys>
            <button aria-label="Cancel edit"><CrossIcon /></button>
            <button aria-label="Enter edit"><CheckIcon /></button>
            <button aria-label="Insert function"><Fx>f<FxSmall>x</FxSmall></Fx></button>
          </FormulaKeys>
          <FormulaField><BareInput $pad={11} aria-label="Formula" defaultValue="Operator's Log" /><ChevronIcon down color="#bbb" /></FormulaField>
        </FormulaBar>
        <Workspace>
          <Corner><CornerIcon /></Corner>
          <ColumnHeads>{"ABCDEFGHIJKLM".split("").map((c) => <ColumnHead key={c}>{c}</ColumnHead>)}</ColumnHeads>
          <VScroll>
            <VKey aria-label="Scroll up"><UpCaret color="#777" /></VKey>
            <VThumb />
            <Gap />
            <VKey aria-label="Scroll down"><Caret w={7} h={4} color="#777" /></VKey>
          </VScroll>
          <RowHeads>{Array.from({ length: 31 }, (_, i) => <RowHead key={i} $h={rowHeight(i + 1)}>{i + 1}</RowHead>)}</RowHeads>
          <Sheet>
            <Banner>Operator's Log</Banner>
            <Split>
              <MenuPanel>
                <MenuTitle>Menu</MenuTitle>
                <MenuButtons>
                  <MenuButton>{"Operator's\nLog"}</MenuButton>
                  <MenuButton>{"Pump\nChange\nLog"}</MenuButton>
                  <MenuButton>{"Chemical\nChange\nLog"}</MenuButton>
                  <MenuButton $wide>Log Entry</MenuButton>
                </MenuButtons>
              </MenuPanel>
              <LogTable>
                <colgroup><col width="70" /><col width="102" /><col width="70" /><col width="102" /><col width="167" /><col /></colgroup>
                <thead><tr>{["Date", "Time", "Shift", "Operator", "Subject", "Comments"].map((h) => <Head key={h}>{h}</Head>)}</tr></thead>
                <tbody>
                  {LOG.map((r) => (
                    <Row key={r[0] + r[1]}>{r.map((v, i) => <Cell key={i} $date={i === 0} $left={i === 5}>{v}</Cell>)}</Row>
                  ))}
                </tbody>
              </LogTable>
            </Split>
          </Sheet>
        </Workspace>
        <SheetBar>
          <TabArrows><SideCaret left color="#c0c0c0" /><SideCaret color="#c0c0c0" /></TabArrows>
          <SheetTab $w={117} $active>Operator's Log</SheetTab>
          <SheetTab $w={137}>Pump Change Log</SheetTab>
          <SheetTab $w={156}>Chemical Change Log</SheetTab>
          <AddSheet aria-label="New sheet"><PlusIcon /></AddSheet>
          <ScrollLead><SmallGrip><Dash /><Dash /><Dash /></SmallGrip><BlackBlock /></ScrollLead>
          <HScroll>
            <HKey aria-label="Scroll left"><SideCaret left /></HKey>
            <HThumb />
            <Gap />
            <HKey aria-label="Scroll right"><SideCaret /></HKey>
          </HScroll>
        </SheetBar>
        <StatusBar>
          <MacroIcon />
          <ViewKeys>
            <ViewKey $on aria-label="Normal view"><ViewIcon grid /></ViewKey>
            <ViewKey aria-label="Page layout view"><ViewIcon /></ViewKey>
            <ViewKey aria-label="Page break view"><ViewIcon grid /></ViewKey>
          </ViewKeys>
          <StatusBox />
        </StatusBar>
      </Window>
      <LogDialog />
    </>
  );
}
